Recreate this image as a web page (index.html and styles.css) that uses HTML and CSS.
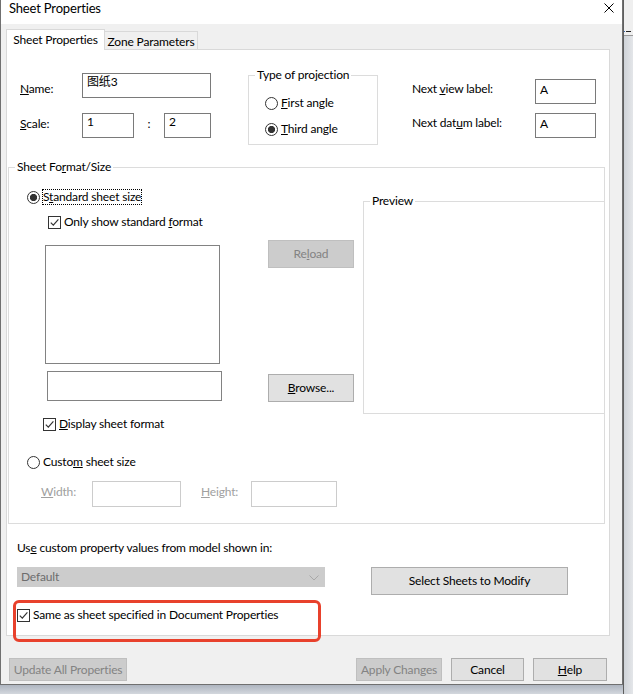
FILE: index.html
```html
<!DOCTYPE html>
<html>
<head>
<meta charset="utf-8">
<title>Sheet Properties</title>
<link rel="stylesheet" href="styles.css">
</head>
<body>
<div class="screen">
  <div class="main">
    <div class="dialog">
      <div class="titlebar">
        <span class="title">Sheet Properties</span>
        <svg class="close" width="10" height="10" viewBox="0 0 10 10"><path d="M0.5 0.5L9.5 9.5M9.5 0.5L0.5 9.5" stroke="#000" stroke-width="1" fill="none"/></svg>
      </div>
      <div class="body">
        <div class="tabs">
          <div class="tab active">Sheet Properties</div>
          <div class="tab">Zone Parameters</div>
        </div>
        <div class="panel">
          <div class="top">
            <div class="col-a">
              <div class="row row-name">
                <span class="lbl lbl-name"><u>N</u>ame:</span>
                <div class="textbox tb-name">图纸3</div>
              </div>
              <div class="row">
                <span class="lbl lbl-scale"><u>S</u>cale:</span>
                <div class="textbox tb-s1">1</div>
                <span class="colon">:</span>
                <div class="textbox tb-s2">2</div>
              </div>
            </div>
            <fieldset class="group proj">
              <legend>Type of projection</legend>
              <div class="proj-body">
                <div class="opt"><span class="radio"></span><span class="opt-text"><u>F</u>irst angle</span></div>
                <div class="opt opt-2"><span class="radio checked"></span><span class="opt-text"><u>T</u>hird angle</span></div>
              </div>
            </fieldset>
            <div class="col-c">
              <div class="row row-view">
                <span class="lbl2">Next <u>v</u>iew label:</span>
                <div class="textbox tb-lab">A</div>
              </div>
              <div class="row">
                <span class="lbl2">Next dat<u>u</u>m label:</span>
                <div class="textbox tb-lab">A</div>
              </div>
            </div>
          </div>

          <fieldset class="group sheet">
            <legend>Sheet Fo<u>r</u>mat/Size</legend>
            <div class="sheet-body">
              <div class="sheet-left">
                <div class="opt opt-std"><span class="radio checked"></span><span class="focus">S<u>t</u>andard sheet size</span></div>
                <div class="opt opt-only"><span class="check"><svg width="11" height="11" viewBox="0 0 11 11"><path d="M1.8 5.6L4.3 8.1L9.4 2.4" stroke="#333" stroke-width="1.2" fill="none"/></svg></span><span class="opt-text">Only show standard <u>f</u>ormat</span></div>
                <div class="files">
                  <div class="files-col">
                    <div class="listbox"></div>
                    <div class="textbox tb-file"></div>
                  </div>
                  <div class="btn-col">
                    <div class="btn disabled btn-reload">Re<u>l</u>oad</div>
                    <div class="btn btn-browse"><u>B</u>rowse...</div>
                  </div>
                </div>
                <div class="opt opt-display"><span class="check"><svg width="11" height="11" viewBox="0 0 11 11"><path d="M1.8 5.6L4.3 8.1L9.4 2.4" stroke="#333" stroke-width="1.2" fill="none"/></svg></span><span class="opt-text"><u>D</u>isplay sheet format</span></div>
                <div class="opt opt-custom"><span class="radio"></span><span class="opt-text">Custo<u>m</u> sheet size</span></div>
                <div class="size-row">
                  <span class="dis-lbl lbl-w"><u>W</u>idth:</span>
                  <div class="textbox dis tb-w"></div>
                  <span class="dis-lbl lbl-h"><u>H</u>eight:</span>
                  <div class="textbox dis tb-h"></div>
                </div>
              </div>
              <fieldset class="group preview">
                <legend>Preview</legend>
                <div class="preview-area"></div>
              </fieldset>
            </div>
          </fieldset>

          <div class="use-text">Us<u>e</u> custom property values from model shown in:</div>
          <div class="combo-row">
            <div class="combo">
              <span class="combo-text">Default</span>
              <svg class="chev" width="10" height="6" viewBox="0 0 10 6"><path d="M0.5 0.5L5 5L9.5 0.5" stroke="#a8a8a8" stroke-width="1" fill="none"/></svg>
            </div>
            <div class="btn btn-select">Select Sheets to Modify</div>
          </div>
          <div class="opt opt-same"><span class="check"><svg width="11" height="11" viewBox="0 0 11 11"><path d="M1.8 5.6L4.3 8.1L9.4 2.4" stroke="#333" stroke-width="1.2" fill="none"/></svg></span><span class="opt-text">Same as sheet specified in Document Properties</span></div>

          <div class="highlight"></div>
        </div>
        <div class="footer">
          <div class="btn disabled fb fb-update">Update All Properties</div>
          <div class="btn disabled fb fb-apply">Apply Changes</div>
          <div class="btn fb fb-cancel">Cancel</div>
          <div class="btn fb fb-help"><u>H</u>elp</div>
        </div>
      </div>
    </div>
    <div class="shadow"></div>
  </div>
  <div class="side">
    <div class="side-top"></div>
    <div class="side-mark"><span class="dot"></span><span class="dash"></span></div>
    <div class="side-rest"></div>
  </div>
</div>
</body>
</html>
```

FILE: styles.css
```css
* { box-sizing: border-box; }
html, body { margin: 0; padding: 0; }
body {
  width: 633px;
  height: 694px;
  overflow: hidden;
  background: #d0d4da;
  font-family: Lato, "Noto Sans CJK SC", sans-serif;
  font-size: 12px;
  letter-spacing: -0.17px;
  line-height: 14px;
  color: #000;
}
u { text-decoration: underline; text-underline-offset: 1px; }

.screen { display: flex; width: 633px; height: 694px; }
.main { display: flex; flex-direction: column; width: 623px; }
.dialog {
  width: 623px;
  height: 685px;
  background: #f0f0f0;
  border: 1px solid #707070;
  border-top: 0;
  display: flex;
  flex-direction: column;
}
.shadow { height: 9px; background: linear-gradient(#aeb5c0, #d3d7dd); }
.side { width: 10px; display: flex; flex-direction: column; border-left: 1px solid #5f5f5f; }
.side-top { height: 27px; background: #efefef; }
.side-mark { height: 8px; background: #efefef; display: flex; align-items: center; gap: 1px; }
.side-mark .dot { width: 1px; height: 1px; background: #3a6ab0; }
.side-mark .dash { width: 5px; height: 1px; background: #222; }
.side-rest { flex: 1; background: linear-gradient(90deg, #cfd3d8, #e4e6e9); border-top: 1px solid #9a9a9a; }

.titlebar {
  height: 24px;
  background: #fff;
  display: flex;
  justify-content: space-between;
  align-items: flex-start;
}
.title { padding-left: 8px; font-size: 13px; line-height: 17px; }
.close { margin-top: 3px; margin-right: 8px; }

.body { flex: 1; padding-left: 5px; display: flex; flex-direction: column; }

.tabs { margin-top: 5px; height: 20px; display: flex; align-items: flex-end; }
.tab {
  height: 18px;
  width: 94px;
  border: 1px solid #d9d9d9;
  border-bottom: 0;
  margin-left: -1px;
  padding-top: 3px;
  text-align: center;
  background: #f0f0f0;
}
.tab.active {
  width: 99px;
  height: 21px;
  margin-left: 0;
  margin-bottom: -1px;
  padding-top: 3px;
  background: #fff;
  position: relative;
  z-index: 1;
}

.panel {
  width: 604px;
  height: 587px;
  background: #fff;
  border: 1px solid #d9d9d9;
  position: relative;
}

/* top section */
.top { margin-top: 18px; height: 76px; padding-left: 13px; display: flex; align-items: flex-start; }
.row { display: flex; align-items: flex-start; }
.col-a { margin-top: 5px; width: 191px; }
.row-name { margin-bottom: 15px; }
.lbl { width: 62px; }
.lbl-name { padding-top: 9px; }
.lbl-scale { padding-top: 4px; }
.textbox {
  background: #fff;
  border: 1px solid #7a7a7a;
  height: 25px;
  padding: 1px 4px 0;
  white-space: nowrap;
}
.tb-name { width: 129px; }
.tb-s1 { width: 52px; }
.tb-s2 { width: 47px; }
.colon { width: 30px; text-align: center; padding-top: 4px; }

.group { border: 1px solid #dcdcdc; margin: 0; padding: 0; min-width: 0; }
.group > legend { margin-left: 6px; padding: 0 2px; line-height: 14px; }

.proj { width: 130px; margin-left: 37px; }
.proj-body { padding: 13px 0 7px 16px; }
.opt { display: flex; align-items: center; height: 16px; }
.opt-2 { margin-top: 10px; }
.radio {
  width: 13px;
  height: 13px;
  border: 1px solid #333;
  border-radius: 50%;
  background: #fff;
  flex: none;
}
.radio.checked { background: radial-gradient(circle, #333 0, #333 3.3px, #fff 3.9px); }
.opt-text { margin-left: 3px; white-space: nowrap; }
.check {
  width: 13px;
  height: 13px;
  border: 1px solid #333;
  background: #fff;
  flex: none;
  display: flex;
}

.col-c { margin-left: 34px; margin-top: 11px; }
.row-view { margin-bottom: 9px; }
.lbl2 { width: 123px; padding-top: 3px; white-space: nowrap; }
.tb-lab { width: 61px; padding-top: 3px; }

/* sheet format */
.sheet { width: 597px; margin: 16px 0 0 1px; }
.sheet-body { display: flex; align-items: flex-start; }
.sheet-left { width: 354px; flex: none; padding: 0 0 16px 18px; }
.opt-std { margin-top: 15px; }
.focus { margin-left: 2px; border: 1px dotted #000; line-height: 14px; white-space: nowrap; }
.opt-only { margin-top: 9px; padding-left: 21px; }
.files { margin-top: 10px; display: flex; align-items: flex-start; }
.files-col { margin-left: 18px; margin-top: 5px; }
.listbox { width: 175px; height: 119px; border: 1px solid #828282; background: #fff; }
.tb-file { width: 175px; height: 30px; margin-top: 7px; margin-left: 2px; border-color: #828282; }
.btn-col { margin-left: 46px; display: flex; flex-direction: column; }
.btn {
  background: #e1e1e1;
  border: 1px solid #adadad;
  display: flex;
  align-items: center;
  justify-content: center;
  white-space: nowrap;
}
.btn.disabled { background: #cccccc; border-color: #bfbfbf; color: #838383; }
.btn-reload { width: 86px; height: 28px; }
.btn-browse { width: 86px; height: 28px; margin-top: 106px; }
.opt-display { margin-top: 14px; padding-left: 16px; }
.opt-custom { margin-top: 22px; }
.size-row { margin-top: 11px; padding-left: 14px; display: flex; align-items: flex-start; }
.dis-lbl { color: #a0a0a0; padding-top: 4px; }
.lbl-w { width: 51px; }
.lbl-h { width: 50px; margin-left: 20px; }
.textbox.dis { border-color: #cccccc; height: 26px; }
.tb-w { width: 89px; }
.tb-h { width: 86px; }

.preview { flex: 1; margin-top: 20px; margin-right: -1px; }
.preview-area { height: 205px; }

/* bottom of panel */
.use-text { margin-top: 17px; padding-left: 10px; }
.combo-row { margin-top: 12px; padding-left: 10px; display: flex; align-items: flex-start; }
.combo {
  width: 308px;
  height: 20px;
  background: #cccccc;
  border: 1px solid #cccccc;
  display: flex;
  align-items: center;
  justify-content: space-between;
  padding: 0 5px 0 3px;
}
.combo-text { color: #6d6d6d; }
.chev { margin-top: 1px; }
.btn-select { width: 197px; height: 28px; margin-left: 46px; }
.opt-same { margin-top: 12px; padding-left: 10px; }

.highlight {
  position: absolute;
  left: 6px;
  top: 550px;
  width: 308px;
  height: 42px;
  border: 3px solid #e8412c;
  border-radius: 6px;
  pointer-events: none;
}

/* footer */
.footer { margin-top: 22px; padding: 0 15px 0 3px; display: flex; }
.fb { height: 23px; }
.fb-update { width: 118px; }
.fb-apply { width: 86px; margin-left: auto; }
.fb-cancel { width: 73px; margin-left: 9px; }
.fb-help { width: 74px; margin-left: 9px; }
```
